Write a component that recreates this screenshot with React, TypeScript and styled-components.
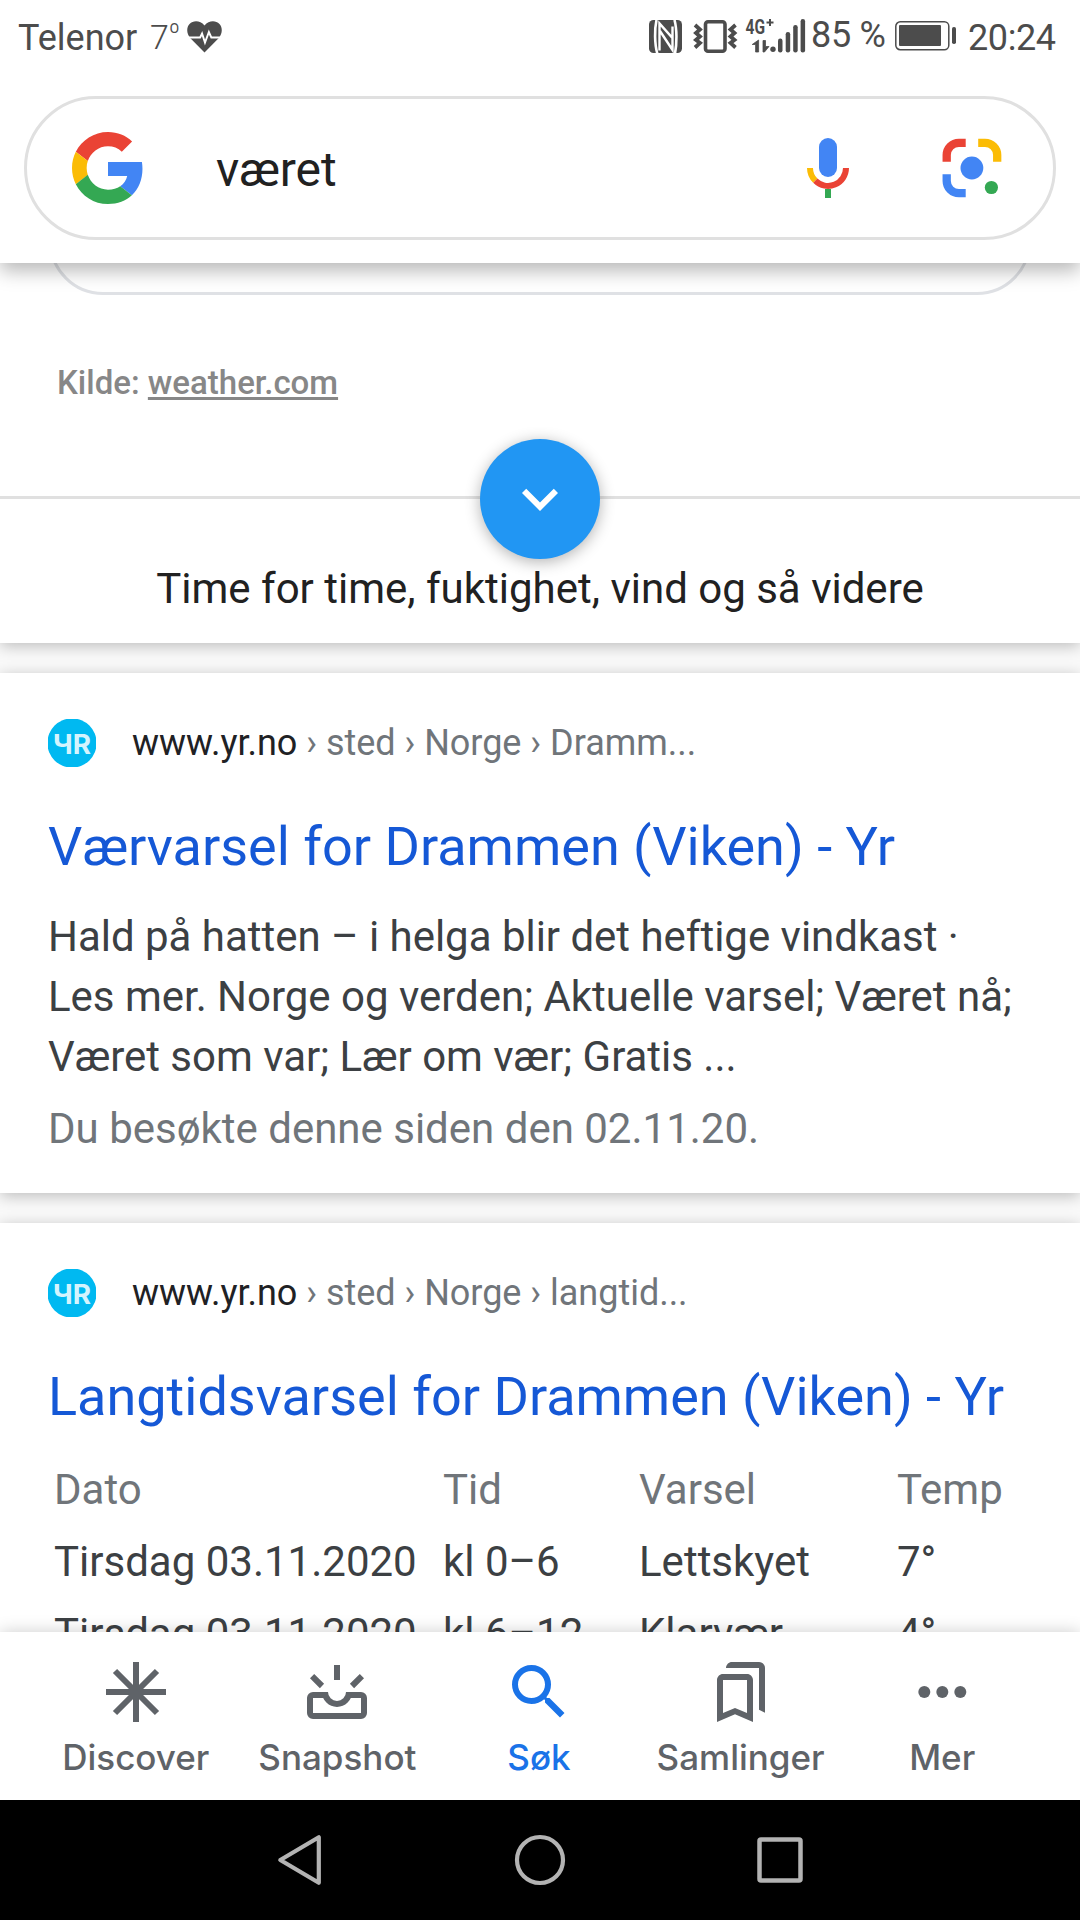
import React from "react";
import styled, { createGlobalStyle } from "styled-components";

const GlobalStyle = createGlobalStyle`
  * { box-sizing: border-box; }
  body { margin: 0; background: #fff; font-family: Roboto, "Liberation Sans", sans-serif; }
  svg { display: block; flex: none; }
`;

const Screen = styled.div`
  width: 1080px;
  height: 1920px;
  display: flex;
  flex-direction: column;
  overflow: hidden;
  background: #fff;
`;

const Header = styled.header`
  position: relative;
  z-index: 2;
  height: 263px;
  flex: none;
  background: #fff;
  box-shadow: 0 8px 18px rgba(0, 0, 0, 0.28);
`;

const StatusBar = styled.div`
  height: 96px;
  padding: 0 24px 0 18px;
  display: flex;
  align-items: flex-start;
  color: #4c4c4c;
`;

const StatusText = styled.span<{ $w: number; $size?: number; $top: number; $ls?: number; $weight?: number }>`
  flex: none;
  width: ${(p) => p.$w}px;
  margin-top: ${(p) => p.$top}px;
  font-size: ${(p) => p.$size ?? 36}px;
  font-weight: ${(p) => p.$weight ?? 400};
  line-height: 40px;
  letter-spacing: ${(p) => p.$ls ?? 0}px;
  white-space: nowrap;
`;

const BatteryText = styled(StatusText)`
  margin-left: -1px;
  margin-right: 1px;
`;

const ClockText = styled(StatusText)`
  margin-left: 11px;
`;

const Degree = styled.sup`
  font-size: 25px;
  line-height: 0;
  vertical-align: 8px;
`;

const StatusSpacer = styled.span`
  flex: 1;
`;

const StatusIcon = styled.svg<{ $top: number; $left?: number }>`
  margin-top: ${(p) => p.$top}px;
  margin-left: ${(p) => p.$left ?? 0}px;
`;

const SearchBox = styled.div`
  height: 144px;
  margin: 0 24px;
  padding: 0 45px;
  display: flex;
  align-items: center;
  border: 3px solid #e0e0e0;
  border-radius: 72px;
`;

const Query = styled.span`
  flex: 1;
  padding: 3px 0 0 72px;
  font-size: 48px;
  line-height: 60px;
  color: #212121;
`;

const SearchActions = styled.div`
  display: flex;
  gap: 72px;
`;

const Results = styled.main`
  height: 1369px;
  flex: none;
  display: flex;
  flex-direction: column;
  gap: 30px;
  overflow: hidden;
  background: #fafafa;
`;

const Card = styled.section`
  flex: none;
  background: #fff;
  box-shadow: 0 3px 15px rgba(0, 0, 0, 0.25);
`;

const WeatherCard = styled(Card)`
  height: 380px;
  display: flex;
  flex-direction: column;
`;

const PillClip = styled.div`
  height: 32px;
  padding: 0 49px;
  display: flex;
  flex-direction: column;
  justify-content: flex-end;
  overflow: hidden;
`;

const Pill = styled.div`
  height: 120px;
  flex: none;
  border: 3px solid #dfe1e5;
  border-radius: 54px;
`;

const Source = styled.div`
  height: 133px;
  margin-top: 68px;
  padding-left: 57px;
  font-size: 33px;
  font-weight: 500;
  line-height: 40px;
  color: #878787;
`;

const SourceLink = styled.a`
  text-decoration: underline;
  text-decoration-thickness: 3px;
  text-underline-offset: 3px;
  text-decoration-skip-ink: none;
`;

const ExpandRow = styled.div`
  position: relative;
  flex: 1;
  padding-top: 60px;
  border-top: 3px solid #e0e0e0;
  font-size: 42px;
  line-height: 60px;
  text-align: center;
  color: #212121;
`;

const ExpandButton = styled.button`
  position: absolute;
  top: -60px;
  left: 480px;
  width: 120px;
  height: 120px;
  padding: 0;
  display: flex;
  align-items: center;
  justify-content: center;
  border: 0;
  border-radius: 50%;
  background: #2196f3;
  box-shadow: 0 3px 15px rgba(0, 0, 0, 0.3);
`;

const ResultCard = styled(Card)<{ $height: number }>`
  height: ${(p) => p.$height}px;
  padding: 46px 48px 0;
`;

const SiteRow = styled.div`
  height: 48px;
  display: flex;
  align-items: center;
  font-size: 36px;
  line-height: 48px;
  letter-spacing: -0.02px;
  color: #70757a;
  white-space: pre;
`;

const Favicon = styled.span`
  width: 48px;
  height: 48px;
  margin-right: 36px;
  flex: none;
  overflow: hidden;
`;

const Domain = styled.span`
  color: #202124;
`;

const Title = styled.h3`
  margin: 47px 0 0;
  font-size: 54px;
  font-weight: 400;
  line-height: 66px;
  white-space: nowrap;
  color: #1558d6;
`;

const Snippet = styled.p`
  margin: 27px 0 0;
  font-size: 42px;
  line-height: 60px;
  letter-spacing: -0.02px;
  white-space: pre;
  color: #3c4043;
`;

const Visited = styled.p`
  margin: 12px 0 0;
  font-size: 42px;
  line-height: 60px;
  color: #70757a;
`;

const Table = styled.div`
  margin: 24px -48px 0 6px;
  display: grid;
  grid-template-columns: 389px 196px 258px 1fr;
  grid-auto-rows: 72px;
`;

const Cell = styled.span<{ $head?: boolean }>`
  font-size: 42px;
  line-height: 72px;
  white-space: nowrap;
  color: ${(p) => (p.$head ? "#70757a" : "#3c4043")};
`;

const TabBar = styled.nav`
  position: relative;
  z-index: 2;
  height: 168px;
  flex: none;
  padding: 24px 37px 0 35px;
  display: grid;
  grid-template-columns: repeat(5, 1fr);
  background: #fff;
  box-shadow: 0 0 16px rgba(0, 0, 0, 0.2);
`;

const Tab = styled.div<{ $active?: boolean }>`
  display: flex;
  flex-direction: column;
  align-items: center;
  color: ${(p) => (p.$active ? "#1a73e8" : "#5f6368")};
`;

const TabLabel = styled.span`
  margin-top: 9px;
  font-family: Inter, Roboto, sans-serif;
  font-size: 35px;
  font-weight: 500;
  line-height: 40px;
`;

const SystemBar = styled.footer`
  height: 120px;
  flex: none;
  display: flex;
  align-items: center;
  justify-content: center;
  gap: 180px;
  background: #000;
`;

const HeartIcon = () => (
  <StatusIcon $top={21} $left={9} width="35" height="32" viewBox="0 0 36 32" preserveAspectRatio="none">
    <path
      fill="#4c4c4c"
      d="M18 31.500 3.500 17.200C-.8 12.500-.6 6.500 2.600 3.100 6.500-.9 13.500-.7 18 4.500 22.500-.7 29.500-.9 33.400 3.100c3.200 3.400 3.400 9.400-.9 14.100z"
    />
    <path d="M1 16.500h12.500l2-4 3 9 4-10.500 2.500 5.500H35" fill="none" stroke="#fff" strokeWidth="2" />
  </StatusIcon>
);

const RadioIcons = () => (
  <StatusIcon $top={7} width="163" height="54" viewBox="649 7 163 54">
    <g fill="#4c4c4c">
      <rect x="649" y="20" width="33" height="33" rx="4.500" />
      <path d="M656.500 20c-2 9-2 24 .8 33.500M674.500 20c2.500 9 2.500 24 .5 33.500" fill="none" stroke="#fff" strokeWidth="2.600" />
      <path d="M659.500 50.500V23.500L672.500 38V26.500M660 31l12.500 19V38" fill="none" stroke="#fff" strokeWidth="2.400" />
      <rect x="705.500" y="21.700" width="19.500" height="29.600" rx="2.500" fill="none" stroke="#4c4c4c" strokeWidth="3.600" />
      <path
        d="M695 25l5 4.500-4 3.500 4 3.500-4 3.500 4 3-5 4.500M735.500 25l-5 4.500 4 3.500-4 3.500 4 3.500-4 3 5 4.500"
        fill="none"
        stroke="#4c4c4c"
        strokeWidth="3.800"
      />
      <path d="M758.600 40v12h-3v-7.500h-3.400zM763 40.500v11.500h1.500l4.500-5.500h-3.500v-6z" stroke="#4c4c4c" strokeWidth=".8" />
      <circle cx="773" cy="49.200" r="2.700" />
      <rect x="778" y="38.500" width="4.500" height="14" rx="2.200" />
      <rect x="785.700" y="32" width="4.500" height="20.500" rx="2.200" />
      <rect x="793.200" y="25" width="4.500" height="27.500" rx="2.200" />
      <rect x="800.600" y="19" width="4.500" height="33.500" rx="2.200" />
      <text x="745.500" y="34" fontFamily="Roboto, sans-serif" fontWeight="700" fontSize="20" textLength="19.500" lengthAdjust="spacingAndGlyphs">
        4G
      </text>
      <path d="M766.500 22.500h7M770 19v7" stroke="#4c4c4c" strokeWidth="2" />
    </g>
  </StatusIcon>
);

const BatteryIcon = () => (
  <StatusIcon $top={21} width="62" height="30" viewBox="0 0 62 30">
    <rect x=".8" y=".8" width="53" height="27.900" rx="4.500" fill="none" stroke="#4c4c4c" strokeWidth="1.500" />
    <rect x="4" y="4" width="42" height="21" rx="1" fill="#4c4c4c" />
    <rect x="57" y="6" width="4" height="17" rx="1.800" fill="#4c4c4c" />
  </StatusIcon>
);

const GoogleLogo = () => (
  <svg width="72" height="72" viewBox="0 0 48 48">
    <path fill="#ea4335" d="M24 9.500c3.540 0 6.710 1.220 9.210 3.600l6.850-6.850C35.900 2.380 30.470 0 24 0 14.620 0 6.510 5.380 2.560 13.220l7.980 6.190C12.430 13.720 17.740 9.500 24 9.500z" />
    <path fill="#4285f4" d="M46.980 24.550c0-1.570-.15-3.090-.38-4.550H24v9.300h12.800c-.58 2.900-2.200 5.200-4.640 6.900l7.730 6c4.510-4.180 7.090-10.360 7.090-17.650z" />
    <path fill="#fbbc05" d="M10.530 28.590c-.48-1.450-.76-2.990-.76-4.590s.27-3.140.76-4.590l-7.980-6.190C.92 16.460 0 20.120 0 24c0 3.880.92 7.540 2.560 10.780l7.970-6.190z" />
    <path fill="#34a853" d="M24 48c6.480 0 11.930-2.130 15.890-5.810l-7.730-6c-2.150 1.450-4.920 2.300-8.160 2.300-6.260 0-11.570-4.220-13.470-9.910l-7.980 6.190C6.510 42.620 14.620 48 24 48z" />
  </svg>
);

const MicIcon = () => (
  <svg width="72" height="72" viewBox="0 0 72 72">
    <rect x="27" y="6" width="18" height="39" rx="9" fill="#4285f4" />
    <g fill="none" strokeWidth="6">
      <path d="M18 36a18 18 0 0 0 5.300 12.700" stroke="#fbbc05" />
      <path d="M23.300 48.700A18 18 0 0 0 54 36" stroke="#ea4335" />
      <path d="M36 57v9" stroke="#34a853" />
    </g>
  </svg>
);

const LensIcon = () => (
  <svg width="72" height="72" viewBox="0 0 72 72">
    <g fill="none" strokeWidth="8.300">
      <path d="M10.700 29.700V23a12.200 12.200 0 0 1 12.200-12.200h6.800" stroke="#ea4335" />
      <path d="M42.200 10.800H49A12.200 12.200 0 0 1 61.200 23v6.700" stroke="#fbbc05" />
      <path d="M10.700 42.200V49a12.200 12.200 0 0 0 12.200 12.200h6.800" stroke="#4285f4" />
    </g>
    <circle cx="35.900" cy="36" r="11.400" fill="#4285f4" />
    <circle cx="55.400" cy="55.500" r="6.600" fill="#34a853" />
  </svg>
);

const YrMark = () => (
  <Favicon>
    <svg width="48" height="48" viewBox="0 0 48 48">
      <circle cx="24" cy="24" r="24.600" fill="#00b9f1" />
      <text
        x="5"
        y="35"
        fill="#d4f4fe"
        fontFamily="Inter, sans-serif"
        fontWeight="700"
        fontSize="27"
        textLength="38"
        lengthAdjust="spacingAndGlyphs"
      >
        ЧR
      </text>
    </svg>
  </Favicon>
);

const DiscoverIcon = () => (
  <svg width="72" height="72" viewBox="0 0 72 72" stroke="currentColor" strokeWidth="6">
    <path d="M36 6v60M6 36h60M15 15l42 42M57 15 15 57" />
  </svg>
);

const SnapshotIcon = () => (
  <svg width="72" height="72" viewBox="0 0 72 72" fill="none" stroke="currentColor" strokeWidth="6">
    <path d="M24.400 39H12a3 3 0 0 0-3 3v15a3 3 0 0 0 3 3h48a3 3 0 0 0 3-3V42a3 3 0 0 0-3-3H47.600" />
    <path d="M24 36a12 12 0 0 0 24 0" />
    <path d="M36 9v15M11.100 20.200l9.900 9.800M60.900 20.200 51 30" />
  </svg>
);

const SearchIcon = () => (
  <svg width="72" height="72" viewBox="0 0 24 24" fill="currentColor">
    <path d="M15.500 14h-.79l-.28-.27A6.471 6.471 0 0 0 16 9.500 6.500 6.500 0 1 0 9.500 16c1.610 0 3.090-.59 4.230-1.570l.27.28v.79l5 4.990L20.490 19l-4.990-5zm-6 0C7.010 14 5 11.990 5 9.500S7.010 5 9.500 5 14 7.010 14 9.500 11.990 14 9.500 14z" />
  </svg>
);

const CollectionsIcon = () => (
  <svg width="72" height="72" viewBox="0 0 24 24" fill="currentColor" fillRule="evenodd">
    <path d="M14 6H6c-1.100 0-2 .9-2 2v14l6-2.570L16 22V8c0-1.100-.9-2-2-2zM6 8h8v11l-4-1.670L6 19z" />
    <path d="M18 2H9C7.900 2 7 2.900 7 4h11v13.900l2 1V4c0-1.100-.9-2-2-2z" />
  </svg>
);

const MoreIcon = () => (
  <svg width="72" height="72" viewBox="0 0 24 24" fill="currentColor">
    <circle cx="6.100" cy="12" r="2" />
    <circle cx="12.100" cy="12" r="2" />
    <circle cx="18.100" cy="12" r="2" />
  </svg>
);

const tabs = [
  { label: "Discover", icon: <DiscoverIcon /> },
  { label: "Snapshot", icon: <SnapshotIcon /> },
  { label: "Søk", icon: <SearchIcon />, active: true },
  { label: "Samlinger", icon: <CollectionsIcon /> },
  { label: "Mer", icon: <MoreIcon /> },
];

const forecast = [
  ["Tirsdag 03.11.2020", "kl 0–6", "Lettskyet", "7°"],
  ["Tirsdag 03.11.2020", "kl 6–12", "Klarvær", "4°"],
];

const SiteLine = ({ path }: { path: string }) => (
  <SiteRow>
    <YrMark />
    <Domain>www.yr.no</Domain>
    {path}
  </SiteRow>
);

export default function App() {
  return (
    <Screen>
      <GlobalStyle />
      <Header>
        <StatusBar>
          <StatusText $w={132} $top={18}>Telenor</StatusText>
          <StatusText $w={28} $top={17} $size={34} $weight={300}>
            7<Degree>º</Degree>
          </StatusText>
          <HeartIcon />
          <StatusSpacer />
          <RadioIcons />
          <BatteryText $w={83} $top={15} $ls={-0.3}>85 %</BatteryText>
          <BatteryIcon />
          <ClockText $w={88} $top={18} $ls={-0.4}>20:24</ClockText>
        </StatusBar>
        <SearchBox>
          <GoogleLogo />
          <Query>været</Query>
          <SearchActions>
            <MicIcon />
            <LensIcon />
          </SearchActions>
        </SearchBox>
      </Header>

      <Results>
        <WeatherCard>
          <PillClip>
            <Pill />
          </PillClip>
          <Source>
            Kilde: <SourceLink>weather.com</SourceLink>
          </Source>
          <ExpandRow>
            <ExpandButton aria-label="Vis mer">
              <svg width="72" height="72" viewBox="0 0 24 24" fill="#fff">
                <path d="M16.590 8.590 12 13.170 7.410 8.590 6 10l6 6 6-6z" />
              </svg>
            </ExpandButton>
            Time for time, fuktighet, vind og så videre
          </ExpandRow>
        </WeatherCard>

        <ResultCard $height={520}>
          <SiteLine path=" › sted › Norge › Dramm..." />
          <Title>Værvarsel for Drammen (Viken) - Yr</Title>
          <Snippet>
            {"Hald på hatten – i helga blir det heftige vindkast ·\nLes mer. Norge og verden; Aktuelle varsel; Været nå;\nVæret som var; Lær om vær; Gratis ..."}
          </Snippet>
          <Visited>Du besøkte denne siden den 02.11.20.</Visited>
        </ResultCard>

        <ResultCard $height={520}>
          <SiteLine path=" › sted › Norge › langtid..." />
          <Title>Langtidsvarsel for Drammen (Viken) - Yr</Title>
          <Table>
            {["Dato", "Tid", "Varsel", "Temp"].map((h) => (
              <Cell key={h} $head>
                {h}
              </Cell>
            ))}
            {forecast.flatMap((row, r) => row.map((c, i) => <Cell key={`${r}-${i}`}>{c}</Cell>))}
          </Table>
        </ResultCard>
      </Results>

      <TabBar>
        {tabs.map((t) => (
          <Tab key={t.label} $active={t.active}>
            {t.icon}
            <TabLabel>{t.label}</TabLabel>
          </Tab>
        ))}
      </TabBar>

      <SystemBar>
        <svg width="60" height="60" viewBox="0 0 60 60" fill="none" stroke="#b3b3b3" strokeWidth="4.200" strokeLinejoin="round">
          <path d="M48.800 7.200v45.600L10.300 30z" />
        </svg>
        <svg width="60" height="60" viewBox="0 0 60 60" fill="none" stroke="#b3b3b3" strokeWidth="4.200">
          <circle cx="30" cy="30" r="23" />
        </svg>
        <svg width="60" height="60" viewBox="0 0 60 60" fill="none" stroke="#b3b3b3" strokeWidth="4.500">
          <rect x="9.500" y="9.500" width="41" height="41" rx="1.500" />
        </svg>
      </SystemBar>
    </Screen>
  );
}
